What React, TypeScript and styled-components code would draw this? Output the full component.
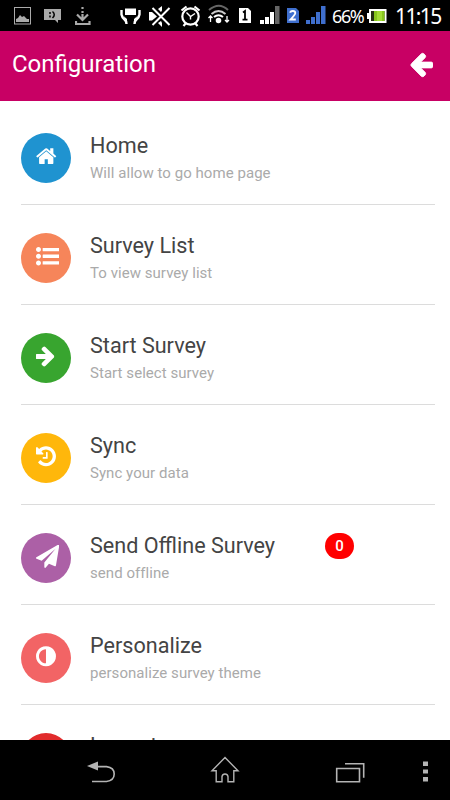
import React from "react";
import styled, { createGlobalStyle } from "styled-components";

const GlobalStyle = createGlobalStyle`
  * { box-sizing: border-box; }
  body { margin: 0; background: #000; overflow: hidden; }
`;

const Screen = styled.div`
  display: flex;
  flex-direction: column;
  width: 450px;
  height: 800px;
  overflow: hidden;
  background: #fff;
  font-family: Roboto, "Liberation Sans", sans-serif;
`;

const StatusBar = styled.div`
  display: flex;
  align-items: center;
  flex: none;
  height: 31px;
  background: #000;
  color: #fff;
`;

const StatusIcon = styled.svg<{ $gap: number }>`
  flex: none;
  height: 31px;
  margin-left: ${(p) => p.$gap}px;
`;

const BatteryText = styled.span`
  width: 34px;
  margin-left: 6px;
  font: 18px/31px "Noto Sans", sans-serif;
  letter-spacing: -1.4px;
  white-space: nowrap;
  padding-top: 1px;
`;

const Clock = styled.span`
  margin-left: 8px;
  font: 21px/31px "Noto Sans", sans-serif;
  letter-spacing: -1.6px;
  white-space: nowrap;
  padding-top: 1px;
`;

const Header = styled.header`
  display: flex;
  align-items: center;
  justify-content: space-between;
  flex: none;
  height: 69.5px;
  padding: 0 17px 4px 12px;
  background: #c80064;
  color: #fff;
`;

const HeaderTitle = styled.h1`
  margin: 0;
  font-size: 24px;
  line-height: 30px;
  font-weight: 400;
`;

const HeaderArrow = styled.svg`
  display: block;
  width: 24px;
  height: 28px;
  margin-top: 2px;
  fill: #fff;
  stroke: #fff;
  stroke-width: 60;
`;

const List = styled.main`
  flex: 1;
  min-height: 0;
  overflow: hidden;
  padding: 4.5px 15px 0 21px;
`;

const Row = styled.div`
  display: flex;
  height: 100px;
  padding-top: 28px;
  border-bottom: 1px solid #dcdcdc;
`;

const Disc = styled.div<{ $color: string }>`
  flex: none;
  width: 50px;
  height: 50px;
  padding: 12px 0 0 15px;
  border-radius: 50%;
  background: ${(p) => p.$color};
  svg { display: block; }
`;

const Labels = styled.div`
  width: 235px;
  margin-left: 19px;
  white-space: nowrap;
`;

const Title = styled.div`
  color: #444;
  font-size: 21.6px;
  line-height: 26px;
`;

const Subtitle = styled.div`
  margin-top: 4px;
  color: #aaa;
  font-size: 15px;
  line-height: 20px;
  letter-spacing: 0.05px;
`;

const Badge = styled.span`
  width: 29px;
  height: 26px;
  border-radius: 13px;
  background: #f00;
  color: #fff;
  font-size: 15px;
  line-height: 27px;
  font-weight: 500;
  text-align: center;
`;

const NavBar = styled.nav`
  display: flex;
  align-items: flex-start;
  flex: none;
  height: 60px;
  background: #000;
`;

const NavIcon = styled.svg<{ $gap: number }>`
  flex: none;
  height: 60px;
  margin-left: ${(p) => p.$gap}px;
  fill: none;
  stroke: #b4b4b4;
  stroke-width: 1.6;
`;

const HOME =
  "M1472 992v480q0 26-19 45t-45 19h-384v-384h-256v384h-384q-26 0-45-19t-19-45v-480q0-1 .5-3t.5-3l575-474 575 474q1 2 1 6zm223-69l-62 74q-8 9-21 11h-3q-13 0-21-7l-692-577-692 577q-12 8-24 7-13-2-21-11l-62-74q-8-10-7-23.5t11-21.5l719-599q32-26 76-26t76 26l244 204v-195q0-14 9-23t23-9h192q14 0 23 9t9 23v408l219 182q10 8 11 21.5t-7 23.5z";
const DOT = "q0 80-56 136t-136 56-136-56-56-136 56-136 136-56 136 56 56 136z";
const LINE =
  "v192q0 13-9.5 22.5t-22.5 9.5h-1216q-13 0-22.5-9.5t-9.5-22.5v-192q0-13 9.5-22.5t22.5-9.5h1216q13 0 22.5 9.5t9.5 22.5z";
const LIST = [384, 896, 1408].map((y) => `M384 ${y}${DOT}M1792 ${y - 96}${LINE}`).join("");
const ARROW_RIGHT =
  "M1600 960q0 54-37 91l-651 651q-39 37-91 37-51 0-90-37l-75-75q-38-38-38-91t38-91l293-293h-704q-52 0-84.5-37.5t-32.5-90.5v-128q0-53 32.5-90.5t84.5-37.5h704l-293-294q-38-36-38-90t38-90l75-75q38-38 90-38 53 0 91 38l651 651q37 35 37 90z";
const ARROW_LEFT =
  "M1664 896v128q0 53-32.5 90.5t-84.5 37.5h-704l293 294q38 36 38 90t-38 90l-75 76q-37 37-90 37-52 0-91-37l-651-652q-37-37-37-90 0-52 37-91l651-650q38-38 91-38 52 0 90 38l75 74q38 38 38 91t-38 91l-293 293h704q52 0 84.5 37.5t32.5 90.5z";
const HISTORY =
  "M1664 896q0 156-61 298t-164 245-245 164-298 61q-172 0-327-72.5t-264-204.5q-7-10-6.5-22.5t8.5-20.5l137-138q10-9 25-9 16 2 23 12 73 95 179 147t225 52q104 0 198.5-40.5t163.5-109.5 109.5-163.5 40.5-198.5-40.5-198.5-109.5-163.5-163.5-109.5-198.5-40.5q-98 0-188 35.5t-160 101.5l137 138q31 30 14 69-17 40-59 40h-448q-26 0-45-19t-19-45v-448q0-42 40-59 39-17 69 14l130 129q107-101 244.5-156.5t284.5-55.5q156 0 298 61t245 164 164 245 61 298zm-640-288v448q0 14-9 23t-23 9h-320q-14 0-23-9t-9-23v-64q0-14 9-23t23-9h224v-352q0-14 9-23t23-9h64q14 0 23 9t9 23z";
const PLANE =
  "M1764 11q33 24 27 64l-256 1536q-5 29-32 45-14 8-31 8-11 0-24-5l-453-185-242 295q-18 23-49 23-13 0-22-4-19-7-30.5-23.5t-11.5-36.5v-349l864-1059-1069 925-395-162q-37-14-40-55-2-40 32-59l1664-960q15-9 32-9 20 0 36 11z";
const ADJUST =
  "M896 1440v-1088q-148 0-273 73t-198 198-73 273 73 273 198 198 273 73zm768-544q0 209-103 385.5t-279.5 279.5-385.5 103-385.5-103-279.5-279.5-103-385.5 103-385.5 279.5-279.5 385.5-103 385.5 103 279.5 279.5 103 385.5z";

type Item = {
  title: string;
  subtitle: string;
  color: string;
  path: string;
  viewBox: string;
  badge?: string;
};

const items: Item[] = [
  { title: "Home", subtitle: "Will allow to go home page", color: "#1f93d0", path: HOME, viewBox: "70 0 1880 1880" },
  { title: "Survey List", subtitle: "To view survey list", color: "#f6855a", path: LIST, viewBox: "0 30 1792 1792" },
  { title: "Start Survey", subtitle: "Start select survey", color: "#38a52f", path: ARROW_RIGHT, viewBox: "180 60 1820 1820" },
  { title: "Sync", subtitle: "Sync your data", color: "#ffb70b", path: HISTORY, viewBox: "128 30 1792 1792" },
  { title: "Send Offline Survey", subtitle: "send offline", color: "#ac60a6", path: PLANE, viewBox: "0 30 1792 1792", badge: "0" },
  { title: "Personalize", subtitle: "personalize survey theme", color: "#f26465", path: ADJUST, viewBox: "128 30 1792 1792" },
  { title: "Logout", subtitle: "", color: "#e12b2c", path: ARROW_RIGHT, viewBox: "180 60 1820 1820" },
];

const Signal = ({ color, last, gap }: { color: string; last: string; gap: number }) => (
  <StatusIcon $gap={gap} width={20} viewBox="0 0 20 31" fill={color}>
    <rect x="0" y="20" width="4" height="4" />
    <rect x="5" y="17" width="4" height="7" />
    <rect x="10" y="12" width="4" height="12" />
    <rect x="15" y="6" width="4.5" height="18" fill={last} />
  </StatusIcon>
);

const SimCard = ({ color, gap, second }: { color: string; gap: number; second?: boolean }) => (
  <StatusIcon $gap={gap} width={12} viewBox="0 0 12 31">
    <path d="M0 8h9l3 3v12H0z" fill={color} />
    {second ? (
      <path d="M3.3 12.8q0-1.8 2.5-1.8t2.5 2q0 1.5-4.8 6.5h5.3" fill="none" stroke="#fff" strokeWidth="1.8" />
    ) : (
      <path d="M4 12.5l2-1.5v8.5M3.5 19.7h5" fill="none" stroke="#000" strokeWidth="1.8" />
    )}
  </StatusIcon>
);

export default function App() {
  return (
    <Screen>
      <GlobalStyle />
      <StatusBar>
        <StatusIcon $gap={14} width={17} viewBox="0 0 17 31">
          <rect x=".5" y="7.5" width="16" height="16.5" fill="none" stroke="#aaa" />
          <path d="M2 22v-3l2-1 2-3 2 2 2-1 3 3 2 0v3z" fill="#aaa" />
        </StatusIcon>
        <StatusIcon $gap={13} width={17} viewBox="0 0 17 31">
          <path d="M0 9h17v11h-3v3l-3-3H0z" fill="#aaa" />
          <path d="M6 12v2M6 15.5v2M8.5 11.5q3.5 3 0 6.5" fill="none" stroke="#000" strokeWidth="1.5" />
        </StatusIcon>
        <StatusIcon $gap={14} width={16} viewBox="0 0 16 31" fill="none" stroke="#aaa" strokeWidth="2.2">
          <path d="M7.5 7v2M7.5 11v2M7.5 14v6M2 14.5l5.5 5.5 5.5-5.5M1 21v3h13.5v-3" />
        </StatusIcon>
        <StatusIcon $gap={29} width={22} viewBox="0 0 22 31" fill="#fff">
          <path d="M5 8.5h11v6.5H5z" />
          <path d="M1.5 10v4.5q.5 3 3 5q2 1.5 2 4.5M19.5 10v4.5q-.5 3-3 5q-2 1.5-2 4.5" fill="none" stroke="#fff" strokeWidth="2.4" />
          <path d="M3 15.5l4 3.5v3zM18 15.5L14 19v3z" />
        </StatusIcon>
        <StatusIcon $gap={7} width={22} viewBox="0 0 22 31" fill="#fff">
          <path d="M0 12h3l5 4.5-5 4H0zM9 9l4-3v4.5L12 12zM9 23l3-2 1 2v4z" />
          <path d="M3.5 8l17 17M20.5 8l-17 17" stroke="#fff" strokeWidth="2" />
        </StatusIcon>
        <StatusIcon $gap={9} width={21} viewBox="0 0 21 31" fill="none" stroke="#fff" strokeWidth="2.2">
          <circle cx="10.5" cy="16.5" r="8.2" />
          <path d="M1.5 10.5l5-4M19.5 10.5l-5-4M3.5 26l2.5-3M17.5 26l-2.5-3" />
          <path d="M6.5 12.5l4 4 4.5-3M10.5 16.5v3" strokeWidth="1.4" />
        </StatusIcon>
        <StatusIcon $gap={7} width={22} viewBox="0 0 22 31" fill="none" stroke="#fff" strokeWidth="2">
          <path d="M1 10q10-8.5 19 0" stroke="#666" />
          <path d="M3.5 14q7-6 14 0" stroke="#ccc" />
          <path d="M6 17q4.500-3.500 9 0" />
          <circle cx="10.5" cy="20.5" r="1.8" fill="#fff" />
          <path d="M2.5 22v-6M.5 18l2-2 2 2M19 16v6M17 20l2 2 2-2" strokeWidth="1.3" />
        </StatusIcon>
        <SimCard color="#fff" gap={9} />
        <Signal color="#fff" last="#666" gap={9} />
        <SimCard color="#3f6fce" gap={7} second />
        <Signal color="#3f6fce" last="#3f6fce" gap={7} />
        <BatteryText>66%</BatteryText>
        <StatusIcon $gap={1} width={20} viewBox="0 0 20 31">
          <path d="M2 9h17.5v14H2v-4H0v-6h2z" fill="#fff" />
          <rect x="4" y="11" width="13.5" height="10" fill="#263014" />
          <rect x="7" y="11" width="10.5" height="10" fill="#86c51c" />
          <rect x="10" y="11" width="5" height="10" fill="#a2dc35" />
        </StatusIcon>
        <Clock>11:15</Clock>
      </StatusBar>
      <Header>
        <HeaderTitle>Configuration</HeaderTitle>
        <HeaderArrow viewBox="64 64 1600 1792">
          <path d={ARROW_LEFT} />
        </HeaderArrow>
      </Header>
      <List>
        {items.map((item) => (
          <Row key={item.title}>
            <Disc $color={item.color}>
              <svg width="23.3" height="23.3" viewBox={item.viewBox} fill="#fff">
                <path d={item.path} />
              </svg>
            </Disc>
            <Labels>
              <Title>{item.title}</Title>
              <Subtitle>{item.subtitle}</Subtitle>
            </Labels>
            {item.badge && <Badge>{item.badge}</Badge>}
          </Row>
        ))}
      </List>
      <NavBar>
        <NavIcon $gap={86} width={30} viewBox="0 0 30 60">
          <path d="M1 26l11-4.5v9z" fill="#b4b4b4" stroke="none" />
          <path d="M11 26.6h9.5q7.7 1 7.7 7.4t-7.7 7.5H6" />
        </NavIcon>
        <NavIcon $gap={94} width={30} viewBox="0 0 30 60">
          <path d="M15 17.5L28 30.8h-4.2v11H18V36.5q-.5-2.5-3-2.5t-3 2.5v5.3H6.2v-11H2z" strokeWidth="1.4" />
        </NavIcon>
        <NavIcon $gap={95} width={30} viewBox="0 0 30 60">
          <path d="M1.7 28.5h22.8v13.3H1.7zM10 23.7h18.7v14" />
        </NavIcon>
        <NavIcon $gap={57} width={8} viewBox="0 0 8 60">
          <path d="M1 21.5h5v4.5H1zM1 29.5h5v4H1zM1 37h5v4.5H1z" fill="#b4b4b4" stroke="none" />
        </NavIcon>
      </NavBar>
    </Screen>
  );
}
